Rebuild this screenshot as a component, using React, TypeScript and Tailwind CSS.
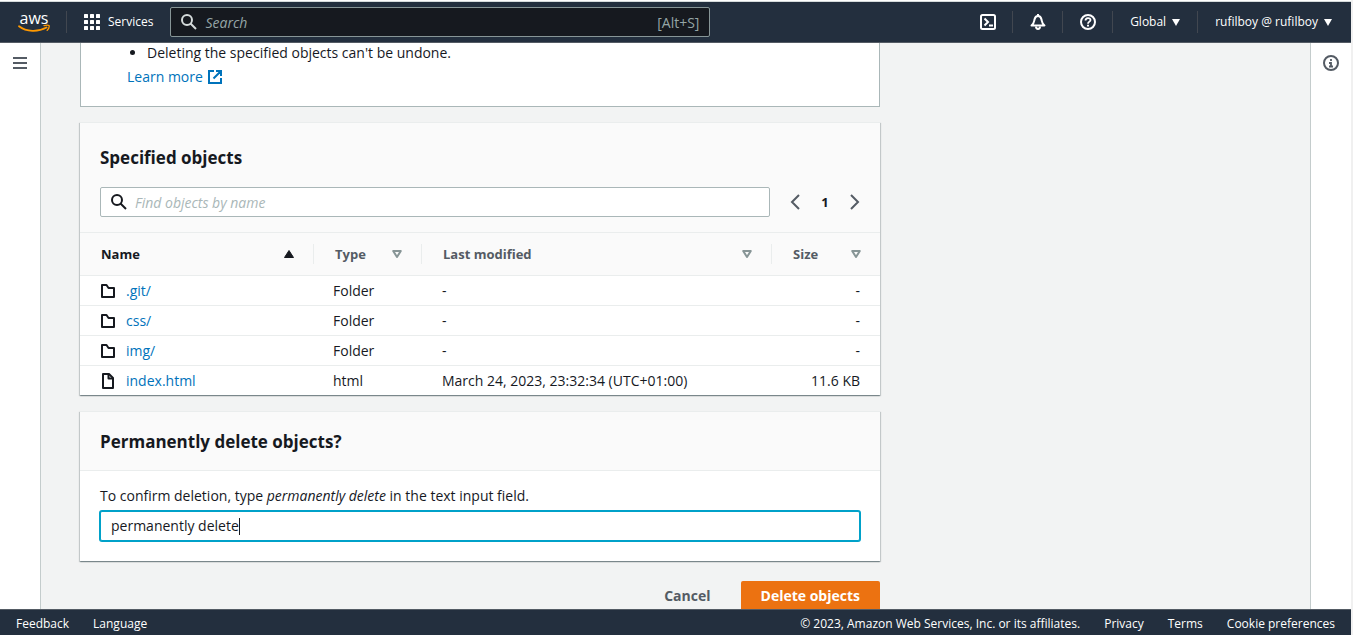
import React, { useState } from 'react';

interface S3Object {
    name: string;
    type: string;
    modified: string;
    size: string;
}

const OBJECTS: S3Object[] = [
    { name: '.git/', type: 'Folder', modified: '-', size: '-' },
    { name: 'css/', type: 'Folder', modified: '-', size: '-' },
    { name: 'img/', type: 'Folder', modified: '-', size: '-' },
    { name: 'index.html', type: 'html', modified: 'March 24, 2023, 23:32:34 (UTC+01:00)', size: '11.6 KB' }
];

const cardShadow =
    'shadow-[0_1px_1px_0_rgba(0,28,36,0.3),1px_1px_1px_0_rgba(0,28,36,0.15),-1px_1px_1px_0_rgba(0,28,36,0.15)]';

function AwsLogo() {
    return (
        <span className="flex w-8 flex-col items-center">
            <span className="text-base leading-3 font-medium text-white">aws</span>
            <svg width="32" height="9" viewBox="0 0 32 9" fill="none" stroke="#ff9900" strokeLinecap="round">
                <path d="M1 2.2C8.500 8 20 8.200 28.500 3.500" strokeWidth="1.800" />
                <path d="M26 1.600C28.500 0.900 30.500 1 31 1.500C31.400 2.300 30.600 4.800 29.200 6.400" strokeWidth="1.300" />
            </svg>
        </span>
    );
}

function SearchIcon({ className }: { className: string }) {
    return (
        <svg className={className} width="16" height="16" viewBox="0 0 16 16" fill="none" stroke="currentColor" strokeWidth="2">
            <circle cx="6" cy="6" r="5" />
            <path d="M9.500 9.500L15 15" />
        </svg>
    );
}

function FolderIcon() {
    return (
        <svg width="16" height="16" viewBox="0 0 16 16" fill="none" stroke="currentColor" strokeWidth="2" strokeLinejoin="round">
            <path d="M2 14V2H6.500L8.500 5H14V14Z" />
        </svg>
    );
}

function FileIcon() {
    return (
        <svg width="16" height="16" viewBox="0 0 16 16" fill="none" stroke="currentColor" strokeWidth="2" strokeLinejoin="round">
            <path d="M3 1H9L13 5V15H3Z" />
            <path d="M8.500 1.500V5.500H12.500" strokeWidth="2" />
        </svg>
    );
}

function SortIcon({ active }: { active?: boolean }) {
    if (active) {
        return (
            <svg width="10" height="8" viewBox="0 0 10 8" fill="#16191f" stroke="#16191f" strokeLinejoin="round">
                <path d="M0.500 7.500L5 0.500L9.500 7.500Z" />
            </svg>
        );
    }
    return (
        <svg width="10" height="8" viewBox="0 0 10 8" fill="none" stroke="#879596" strokeWidth="2" strokeLinejoin="round">
            <path d="M1.200 1H8.800L5 7Z" />
        </svg>
    );
}

function Caret() {
    return (
        <svg width="8" height="7" viewBox="0 0 8 7" fill="currentColor">
            <path d="M0 0H8L4 7Z" />
        </svg>
    );
}

function Divider() {
    return <span className="h-[22px] w-px shrink-0 bg-[#414750]" />;
}

function TopNav() {
    return (
        <header className="flex h-[41px] shrink-0 items-center border-b border-[#545b64] bg-[#232f3e] text-xs text-white">
            <a href="#" aria-label="AWS home" className="flex w-[66px] justify-center pl-0.5">
                <AwsLogo />
            </a>
            <Divider />
            <button className="flex items-center gap-2 pr-[17px] pl-[17px]">
                <svg width="16" height="16" viewBox="0 0 16 16" fill="currentColor">
                    {[0, 6, 12].map((y) =>
                        [0, 6, 12].map((x) => <rect key={`${x}-${y}`} x={x} y={y} width="4" height="4" rx="0.500" />)
                    )}
                </svg>
                Services
            </button>
            <label className="flex h-[30px] w-[540px] items-center rounded-xs border border-[#879596] bg-[#16191f] px-2.5">
                <SearchIcon className="shrink-0 text-[#d5dbdb]" />
                <input
                    type="text"
                    aria-label="Search"
                    placeholder="Search"
                    className="ml-2 min-w-0 flex-1 bg-transparent pt-0.5 text-sm outline-none placeholder:text-[#95a5a6] placeholder:italic"
                />
                <span className="pt-0.5 text-sm text-[#95a5a6]">[Alt+S]</span>
            </label>
            <div className="ml-auto flex items-center">
                <button aria-label="CloudShell" className="flex w-12 justify-center">
                    <svg width="16" height="16" viewBox="0 0 16 16" fill="none" stroke="currentColor" strokeWidth="2">
                        <rect x="1" y="1" width="14" height="14" rx="1.500" />
                        <path d="M4.500 4.500L8 8L4.500 11.500M9 11.500H13" strokeWidth="2" />
                    </svg>
                </button>
                <Divider />
                <button aria-label="Notifications" className="flex w-[49px] justify-center">
                    <svg width="16" height="16" viewBox="0 0 16 16" fill="none" stroke="currentColor" strokeWidth="2" strokeLinejoin="round">
                        <path d="M1.500 11.500C4 9.500 4 8 4.500 5.500C5 3 6.500 2 8 2S11 3 11.500 5.500C12 8 12 9.500 14.500 11.500Z" />
                        <path d="M8 0V2M6 12.500C6 15.800 10 15.800 10 12.500" />
                    </svg>
                </button>
                <Divider />
                <button aria-label="Help" className="flex w-[49px] justify-center">
                    <svg width="16" height="16" viewBox="0 0 16 16" fill="none" stroke="currentColor">
                        <circle cx="8" cy="8" r="7" strokeWidth="2" />
                        <path d="M5.500 6.500C5.500 3.300 10.500 3.300 10.500 6C10.500 7.800 8 7.500 8 9.800" strokeWidth="1.800" />
                        <path d="M8 10.700V12.500" strokeWidth="2" />
                    </svg>
                </button>
                <Divider />
                <button className="flex items-center gap-1.5 px-[17px]">
                    Global <Caret />
                </button>
                <Divider />
                <button className="flex items-center gap-1.5 pr-[19px] pl-[17px]">
                    rufilboy @ rufilboy <Caret />
                </button>
            </div>
        </header>
    );
}

function HeaderCell({ label, active, last }: { label: string; active?: boolean; last?: boolean }) {
    return (
        <th className="h-[42px] p-0 text-left text-[13px] font-bold">
            <div className={`flex h-5 items-center justify-between pr-[19px] pl-[21px] ${last ? '' : 'border-r border-[#eaeded]'}`}>
                <span className={active ? 'text-[#16191f]' : 'text-[#545b64]'}>{label}</span>
                <SortIcon active={active} />
            </div>
        </th>
    );
}

function ObjectsTable() {
    return (
        <table className="w-full table-fixed border-separate border-spacing-0 bg-white">
            <colgroup>
                <col className="w-[234px]" />
                <col className="w-[108px]" />
                <col />
                <col className="w-[108px]" />
            </colgroup>
            <thead className="bg-[#fafafa]">
                <tr>
                    <HeaderCell label="Name" active />
                    <HeaderCell label="Type" />
                    <HeaderCell label="Last modified" />
                    <HeaderCell label="Size" last />
                </tr>
            </thead>
            <tbody>
                {OBJECTS.map((obj) => (
                    <tr key={obj.name} className="h-[30px] *:border-t *:border-[#eaeded]">
                        <td className="p-0 pl-5">
                            <span className="flex items-center gap-2.5">
                                {obj.type === 'Folder' ? <FolderIcon /> : <FileIcon />}
                                <a href="#" className="text-[#0073bb]">{obj.name}</a>
                            </span>
                        </td>
                        <td className="p-0 pl-[19px]">{obj.type}</td>
                        <td className="p-0 pl-5">{obj.modified}</td>
                        <td className="p-0 pr-5 text-right">{obj.size}</td>
                    </tr>
                ))}
            </tbody>
        </table>
    );
}

export default function App() {
    const [confirmText, setConfirmText] = useState('permanently delete');

    return (
        <div className="flex h-screen flex-col border-r-2 border-[#f0f0f0] bg-white pt-px font-['Open_Sans','Noto_Sans',sans-serif] text-sm leading-5 text-[#16191f]">
            <div className="h-px shrink-0 bg-[#d5dbdb]" />
            <TopNav />

            <div className="flex min-h-0 flex-1">
                <nav className="flex w-[41px] shrink-0 justify-center border-r border-[#c4cccc] pt-3">
                    <button aria-label="Open navigation" className="flex size-4 items-center text-[#545b64]">
                        <svg width="16" height="16" viewBox="0 0 16 16" stroke="currentColor" strokeWidth="2">
                            <path d="M1 3H15M1 8H15M1 13H15" />
                        </svg>
                    </button>
                </nav>

                <main className="min-w-0 flex-1 overflow-hidden bg-[#f2f3f3] pr-10 pl-[39px]">
                    <div className="flex max-w-[800px] flex-col">
                        <section className="mb-[15px] h-16 border border-t-0 border-[#aab7b8] bg-white pl-[46px]">
                            <ul className="list-disc pl-5">
                                <li>Deleting the specified objects can't be undone.</li>
                            </ul>
                            <a href="#" className="mt-1 inline-flex items-center gap-1 text-[#0073bb]">
                                Learn more
                                <svg width="16" height="16" viewBox="0 0 16 16" fill="none" stroke="currentColor" strokeWidth="2">
                                    <path d="M7 2H2V14H14V9M9 2H14V7M14 2L6.500 9.500" />
                                </svg>
                            </a>
                        </section>

                        <section className={`mb-4 border-t border-[#eaeded] bg-[#fafafa] ${cardShadow}`}>
                            <div className="border-b border-[#eaeded] px-5 pt-6 pb-[15px]">
                                <h2 className="text-[17px] leading-[22px] font-bold">Specified objects</h2>
                                <div className="mt-[18px] flex items-center">
                                    <label className="flex h-[30px] flex-1 items-center rounded-xs border border-[#aab7b8] bg-white px-2.5">
                                        <SearchIcon className="shrink-0" />
                                        <input
                                            type="text"
                                            aria-label="Find objects by name"
                                            placeholder="Find objects by name"
                                            className="ml-2 min-w-0 flex-1 pt-0.5 outline-none placeholder:text-[#aab7b8] placeholder:italic"
                                        />
                                    </label>
                                    <div className="-mr-0.5 ml-[18px] flex items-center text-[#545b64]">
                                        <button aria-label="Previous page">
                                            <svg width="16" height="16" viewBox="0 0 16 16" fill="none" stroke="currentColor" strokeWidth="2">
                                                <path d="M11 1L4 8L11 15" />
                                            </svg>
                                        </button>
                                        <button className="w-[42px] text-center text-[13px] font-bold text-[#16191f]">1</button>
                                        <button aria-label="Next page">
                                            <svg width="16" height="16" viewBox="0 0 16 16" fill="none" stroke="currentColor" strokeWidth="2">
                                                <path d="M5 1L12 8L5 15" />
                                            </svg>
                                        </button>
                                    </div>
                                </div>
                            </div>
                            <ObjectsTable />
                        </section>

                        <section className={`border-t border-[#eaeded] bg-white ${cardShadow}`}>
                            <div className="border-b border-[#eaeded] bg-[#fafafa] px-5 pt-[19px] pb-[17px]">
                                <h2 className="text-[17px] leading-[22px] font-bold">Permanently delete objects?</h2>
                            </div>
                            <div className="px-5 pt-[15px] pb-5">
                                <label htmlFor="confirm" className="mb-[5px] block">
                                    To confirm deletion, type <em>permanently delete</em> in the text input field.
                                </label>
                                <div className="flex h-[30px] items-center rounded-xs border border-[#00a1c9] bg-white px-2.5 ring-1 ring-[#00a1c9]">
                                    <input
                                        id="confirm"
                                        type="text"
                                        value={confirmText}
                                        onChange={(e) => setConfirmText(e.target.value)}
                                        className="field-sizing-content max-w-full min-w-px caret-transparent outline-none"
                                    />
                                    <span className="h-[17px] w-px bg-[#16191f]" />
                                </div>
                            </div>
                        </section>

                        <div className="mt-5 flex justify-end gap-2.5 font-bold">
                            <button className="h-[30px] px-5 text-[#545b64]">Cancel</button>
                            <button className="h-[30px] rounded-xs bg-[#ec7211] px-5 text-white">Delete objects</button>
                        </div>
                    </div>
                </main>

                <aside className="flex w-[41px] shrink-0 justify-center border-l border-[#c4cccc] pt-3">
                    <button aria-label="Open help panel" className="size-4 text-[#545b64]">
                        <svg width="16" height="16" viewBox="0 0 16 16" fill="none" stroke="currentColor" strokeWidth="2">
                            <circle cx="8" cy="8" r="7" />
                            <path d="M8 4V6M6 8H8V11.500M6 11.500H10" strokeWidth="1.800" />
                        </svg>
                    </button>
                </aside>
            </div>

            <footer className="flex h-[26px] shrink-0 items-center gap-6 border-t border-[#545b64] bg-[#232f3e] px-4 pt-0.5 text-xs text-white">
                <a href="#">Feedback</a>
                <a href="#">Language</a>
                <span className="ml-auto">© 2023, Amazon Web Services, Inc. or its affiliates.</span>
                <a href="#">Privacy</a>
                <a href="#">Terms</a>
                <a href="#">Cookie preferences</a>
            </footer>
        </div>
    );
}
